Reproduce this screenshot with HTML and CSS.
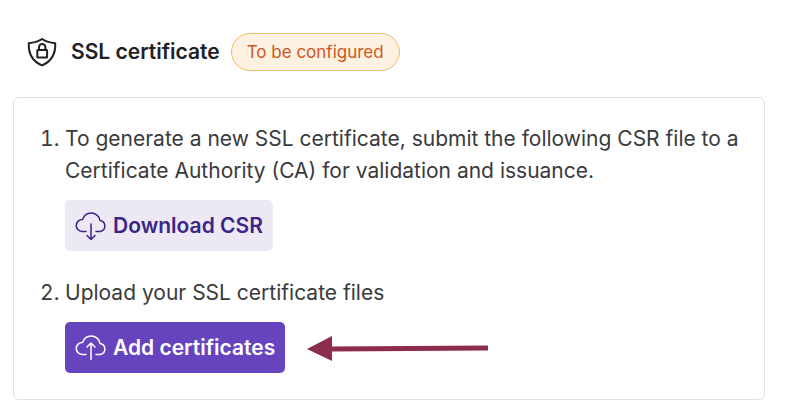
FILE: index.html
```html
<!DOCTYPE html>
<html lang="en">
<head>
<meta charset="utf-8">
<meta name="viewport" content="width=device-width, initial-scale=1">
<title>SSL certificate</title>
<link rel="stylesheet" href="styles.css">
</head>
<body>
<main class="page">
  <header class="header">
    <svg class="shield" viewBox="0 0 32 32" aria-hidden="true">
      <path d="M16 3C12 5.600 8 6.800 2.800 7.200C2.200 17.500 6 25 16 29.400C26 25 29.800 17.500 29.200 7.200C24 6.800 20 5.600 16 3Z"/>
      <rect x="11.300" y="14" width="9.800" height="7.500" rx="0.500"/>
      <path d="M13 14V11.300a3.200 3.200 0 0 1 6.400 0V14"/>
    </svg>
    <h1 class="title">SSL certificate</h1>
    <span class="badge">To be configured</span>
  </header>
  <section class="card">
    <ol class="steps">
      <li class="step">
        <p class="text">To generate a new SSL certificate, submit the following CSR file to a Certificate Authority (CA) for validation and issuance.</p>
        <button class="button button-light" type="button">
          <svg class="cloud" viewBox="0 0 32 32" aria-hidden="true">
            <path d="M11 21.500H7A6 6 0 0 1 7.500 9.500C9 5.500 12 3 16 3C20.500 3 24.500 6 25 10.500A5.600 5.600 0 0 1 25.500 21.500H21M16 14V29.500M12 25.500l4 4l4-4"/>
          </svg>
          Download CSR
        </button>
      </li>
      <li class="step">
        <p class="text">Upload your SSL certificate files</p>
        <div class="action">
          <button class="button button-primary" type="button">
            <svg class="cloud" viewBox="0 0 32 32" aria-hidden="true">
              <path d="M11 22.500H7A6 6 0 0 1 7.500 10.500C9 6.500 12 4 16 4C20.500 4 24.500 7 25 11.500A5.600 5.600 0 0 1 25.500 22.500H21M16 27.500V11M12 15l4-4l4 4"/>
            </svg>
            Add certificates
          </button>
          <svg class="arrow" viewBox="0 0 182 28" aria-hidden="true">
            <path class="arrow-line" d="M24 15L181 14"/>
            <path class="arrow-head" d="M0 15L25 2V27Z"/>
          </svg>
        </div>
      </li>
    </ol>
  </section>
</main>
</body>
</html>
```

FILE: styles.css
```css
* {
  box-sizing: border-box;
}

body {
  margin: 0;
  background: #fff;
  color: #3a3a3d;
  font-family: Inter, "Liberation Sans", sans-serif;
  font-size: 21px;
  line-height: 32px;
}

.page {
  padding: 33px 21px 16px 13px;
}

.header {
  display: flex;
  align-items: center;
  padding-left: 13px;
  margin-bottom: 26px;
}

.shield,
.cloud {
  flex: none;
  width: 32px;
  height: 32px;
  fill: none;
  stroke: currentColor;
  stroke-linecap: round;
  stroke-linejoin: round;
}

.shield {
  color: #202024;
  stroke-width: 2;
}

.title {
  margin: 0 11px 0 13px;
  color: #202024;
  font-size: 21px;
  font-weight: 600;
}

.badge {
  padding: 0 15px;
  border: 1px solid #f0bb68;
  border-radius: 19px;
  background: #fdf2e1;
  color: #cf5622;
  font-size: 17px;
  line-height: 36px;
}

.card {
  padding: 25px 20px 26px 27px;
  border: 1px solid #e2e2e6;
  border-radius: 6px;
}

.steps {
  margin: 0;
  padding-left: 24px;
}

.step + .step {
  margin-top: 26px;
}

.text {
  margin: 0 0 13px;
}

.action {
  display: flex;
  align-items: center;
  gap: 22px;
}

.button {
  display: flex;
  align-items: center;
  gap: 6px;
  height: 51px;
  padding: 0 10px;
  border: 0;
  border-radius: 5px;
  font: inherit;
  font-weight: 600;
}

.button-light {
  background: #ede9f4;
  color: #3b2585;
}

.button-primary {
  background: #6644be;
  color: #fff;
}

.cloud {
  stroke-width: 1.500;
}

.arrow {
  width: 182px;
  height: 28px;
}

.arrow-line {
  fill: none;
  stroke: #8c2d50;
  stroke-width: 5;
}

.arrow-head {
  fill: #8c2d50;
}
```
